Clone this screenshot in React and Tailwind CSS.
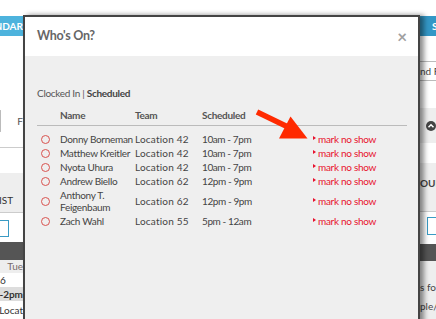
import React from 'react';

const people = [
  { name: 'Donny Borneman', team: 'Location 42', time: '10am - 7pm' },
  { name: 'Matthew Kreitler', team: 'Location 42', time: '10am - 7pm' },
  { name: 'Nyota Uhura', team: 'Location 42', time: '10am - 7pm' },
  { name: 'Andrew Biello', team: 'Location 62', time: '12pm - 9pm' },
  { name: 'Anthony T.\nFeigenbaum', team: 'Location 62', time: '12pm - 9pm' },
  { name: 'Zach Wahl', team: 'Location 55', time: '5pm - 12am' },
];

const LeftStrip = () => (
  <div className="w-[23px] flex flex-col overflow-hidden text-[10px] text-[#333]">
    <div className="h-[16px]" />
    <div className="h-[20px] bg-[#4db3dd] flex items-center justify-end text-white font-bold whitespace-nowrap">CALENDAR</div>
    <div className="h-[74px]" />
    <div className="h-[22px] flex items-center">
      <div className="w-[4px] h-full border border-l-0 border-[#bbb] rounded-r-sm" />
      <span className="ml-[16px] text-[#555]">F</span>
    </div>
    <div className="h-[15px]" />
    <div className="h-px bg-[#ccc]" />
    <div className="h-[25px]" />
    <div className="h-[39px] bg-[#eee] flex items-end pb-[4px]">
      <span className="-ml-[1px]">IST</span>
    </div>
    <div className="h-px bg-[#ccc]" />
    <div className="h-[7px]" />
    <div className="h-[17px] w-[9px] border border-l-0 border-[#3a9bc4]" />
    <div className="h-[5px]" />
    <div className="h-[18px] bg-[#555]" />
    <div className="h-[13px] bg-[#eee] flex items-center justify-end text-[#776b6b]">Tue</div>
    <div className="h-[14px] flex items-center">6</div>
    <div className="h-[14px] bg-[#ddd] flex items-center justify-end font-bold whitespace-nowrap">m-2pm</div>
    <div className="h-[18px] flex items-center justify-end whitespace-nowrap">Locat</div>
  </div>
);

const RightStrip = () => (
  <div className="w-[16px] flex flex-col overflow-hidden text-[10px] text-[#444]">
    <div className="h-[16px]" />
    <div className="h-[20px] bg-[#3397c6] flex items-center pl-[12px] text-white font-bold">S</div>
    <div className="h-[25px]" />
    <div className="h-px bg-[#bbb]" />
    <div className="h-[18px] flex items-center whitespace-nowrap">nd F</div>
    <div className="h-px bg-[#bbb]" />
    <div className="h-[27px]" />
    <div className="h-[35px] bg-[#eee] flex items-center pl-[6px]">
      <svg width="12" height="12" viewBox="0 0 12 12">
        <circle cx="6" cy="6" r="6" fill="#444" />
        <path d="M3 7.5 L6 4.5 L9 7.5" stroke="#fff" strokeWidth="1.8" fill="none" />
      </svg>
    </div>
    <div className="h-[20px]" />
    <div className="h-[48px] bg-[#eee] flex items-end pb-[20px] font-bold whitespace-nowrap">OURC</div>
    <div className="h-px bg-[#ccc]" />
    <div className="h-[5px]" />
    <div className="h-[18px] ml-[7px] border border-r-0 border-[#3a9bc4] bg-white" />
    <div className="h-[9px]" />
    <div className="h-[17px] bg-[#555]" />
    <div className="flex-1 bg-[#eee] flex flex-col pt-[19px] gap-[4px] whitespace-nowrap">
      <span>s for</span>
      <span>ple/t</span>
    </div>
  </div>
);

const WhosOn = () => (
  <div className="absolute left-[23px] top-[15px] w-[397px] h-[320px] border-t-2 border-x-2 border-[#444] shadow-[4px_0_5px_rgba(0,0,0,0.45)] flex flex-col">
    <div className="h-[39px] bg-white flex items-center justify-between pl-[12px] pr-[11px]">
      <span className="text-[12.5px] tracking-[-0.3px] font-bold text-[#666]">Who's On?</span>
      <span className="text-[17px] font-bold text-[#a0a0a0] leading-none">×</span>
    </div>
    <div className="flex-1 bg-[#efefef] pl-[12px] pr-[11px] pt-[31px] text-[10px] tracking-[-0.3px] text-[#444]">
      <div className="leading-[12px] text-[#555]">
        Clocked In | <span className="font-bold text-[#444]">Scheduled</span>
      </div>
      <div className="mt-[10px] grid grid-cols-[23px_75px_67px_111px_1fr] leading-[12px] font-bold text-[#555] pb-[4px] border-b border-[#bbb]">
        <div />
        <div>Name</div>
        <div>Team</div>
        <div>Scheduled</div>
        <div />
      </div>
      <div className="mt-[6px]">
        {people.map((p) => (
          <div key={p.name} className="grid grid-cols-[23px_75px_67px_111px_1fr] items-center py-[1px] leading-[12px]">
            <div className="pl-[4px] flex items-center">
              <div className="w-[9px] h-[9px] rounded-full border border-[#d9534f]" />
            </div>
            <div className="whitespace-pre">{p.name}</div>
            <div className="tracking-[0.2px]">{p.team}</div>
            <div className="tracking-[-0.4px]">{p.time}</div>
            <div className="flex items-center text-[#e8112d]">
              <svg width="3" height="4" viewBox="0 0 3 4" className="mr-[2px] -mt-[3px]">
                <path d="M0 0 L3 2 L0 4 Z" fill="#e8112d" />
              </svg>
              <span>mark no show</span>
            </div>
          </div>
        ))}
      </div>
    </div>
  </div>
);

export default function App() {
  return (
    <div className="relative w-[436px] h-[319px] overflow-hidden bg-white font-['Lato',sans-serif]">
      <div className="flex h-full">
        <LeftStrip />
        <div className="flex-1" />
        <RightStrip />
      </div>
      <WhosOn />
      <svg className="absolute left-[250px] top-[105px]" width="70" height="40" viewBox="0 0 70 40">
        <line x1="7" y1="7" x2="38" y2="22" stroke="#ff2a00" strokeWidth="5.5" />
        <path d="M40.5 11.5 L29 33.5 L57.5 33.5 Z" fill="#ff2a00" />
      </svg>
    </div>
  );
}
